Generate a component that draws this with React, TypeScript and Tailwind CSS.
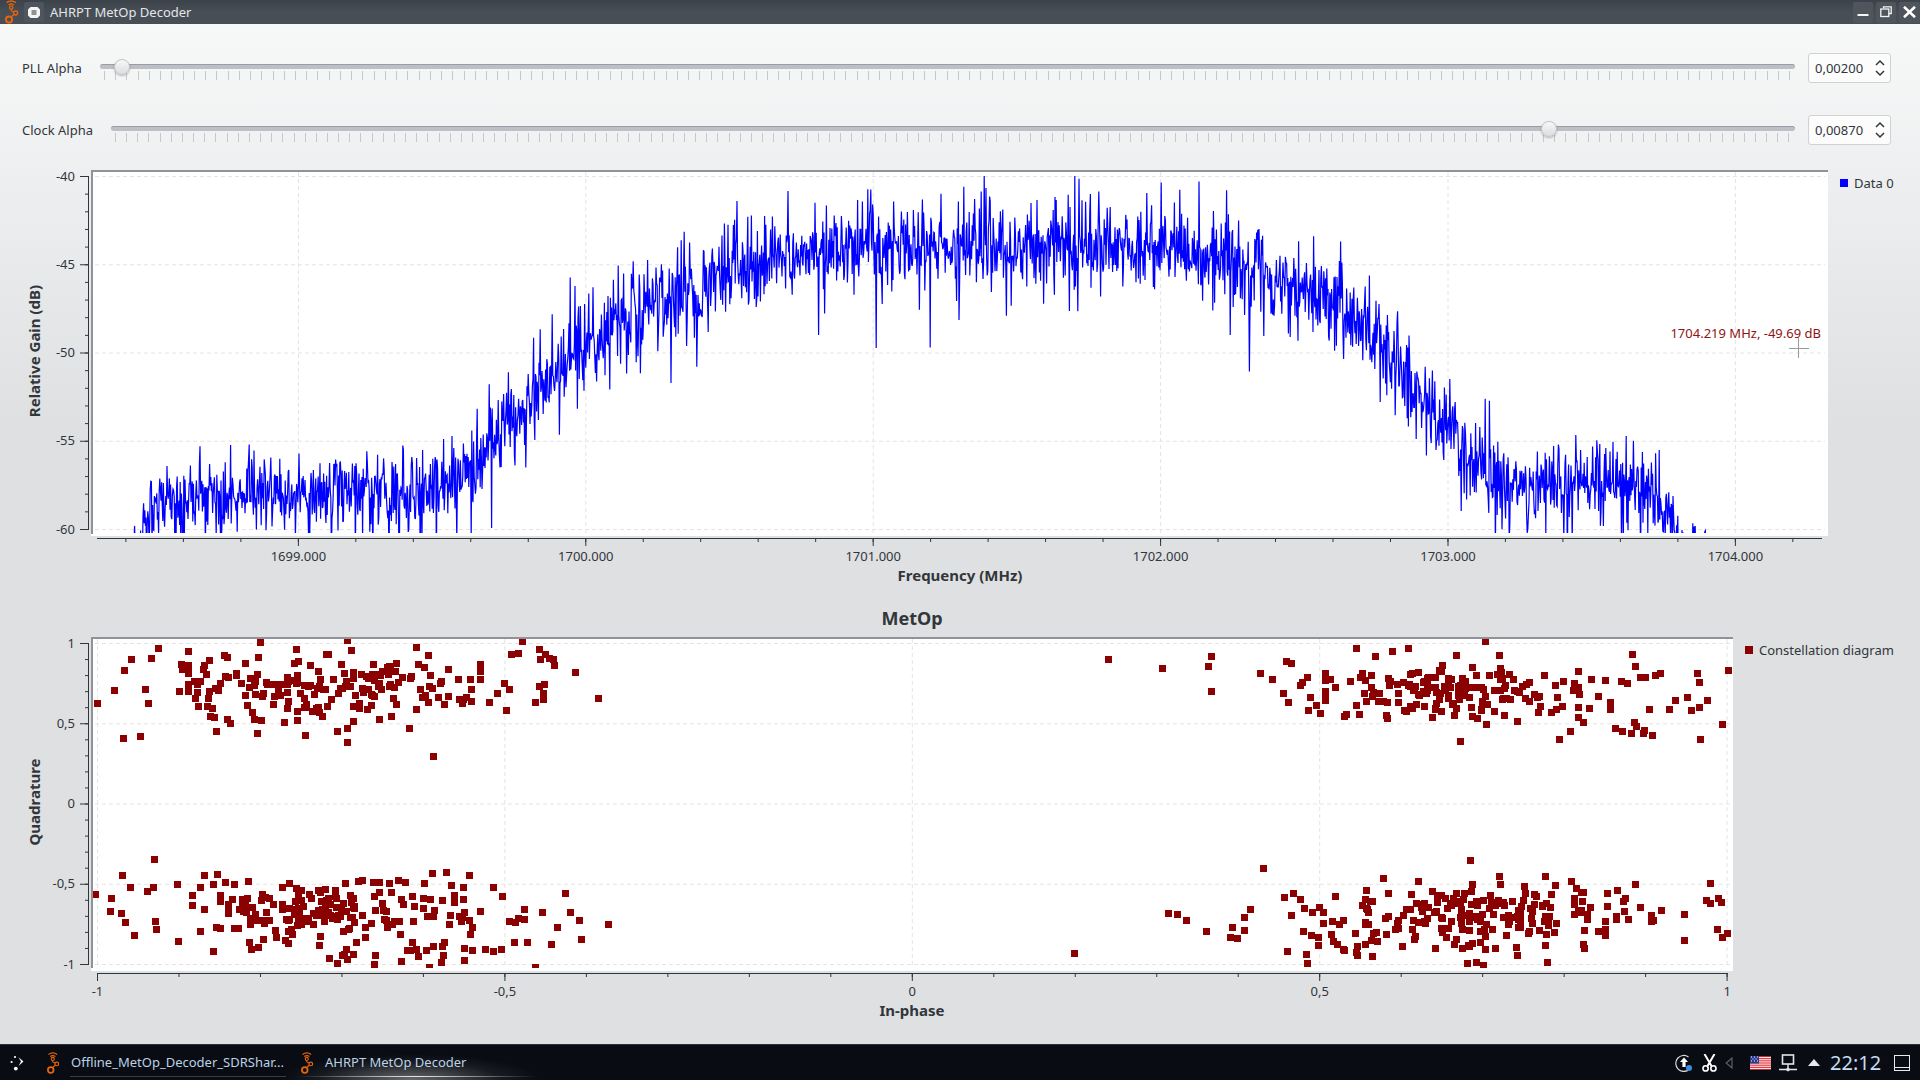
import React from 'react';

// small seeded generator so the noisy traces stay the same between runs
function makeRandom(seed: number) {
  let a = seed;
  return () => {
    a = (a + 0x6d2b79f5) | 0;
    let t = Math.imul(a ^ (a >>> 15), 1 | a);
    t = (t + Math.imul(t ^ (t >>> 7), 61 | t)) ^ t;
    return ((t ^ (t >>> 14)) >>> 0) / 4294967296;
  };
}

function gauss(rnd: () => number) {
  return Math.sqrt(-2 * Math.log(rnd() + 1e-9)) * Math.cos(2 * Math.PI * rnd());
}

const envelope: [number, number][] = [
  [125, -63], [140, -60.5], [160, -58.3], [300, -58], [420, -58], [470, -57], [500, -54.5], [540, -52],
  [585, -49.5], [650, -47.5], [733, -45.6], [800, -44.5], [900, -44], [1000, -44.3], [1100, -44], [1200, -44.5],
  [1280, -46], [1340, -47.5], [1380, -49.5], [1420, -52.5], [1460, -55.5], [1500, -57.5], [1600, -57.5],
  [1650, -57.5], [1670, -59.5], [1685, -61.8], [1709, -62.2]
];

function envelopeAt(x: number) {
  for (let i = 1; i < envelope.length; i++) {
    if (x <= envelope[i][0]) {
      const [x0, y0] = envelope[i - 1];
      const [x1, y1] = envelope[i];
      return y0 + ((x - x0) / (x1 - x0)) * (y1 - y0);
    }
  }
  return -65;
}

const dbToY = (db: number) => 176 + ((-40 - db) / 20) * 353;

function spectrumPoints() {
  const rnd = makeRandom(4242);
  const pts: string[] = [];
  for (let x = 125; x <= 1709; x += 0.6) {
    // the noise floor at both ends has shorter spikes than the passband
    const floor = x < 470 || x > 1500;
    const mean = envelopeAt(x);
    let v = mean + gauss(rnd) * (floor ? 0.95 : 1.1);
    const r = rnd();
    if (r < 0.12) v += 0.8 + rnd() * (floor ? 1.1 : 2.3);
    else if (r < 0.18) v -= 1 + rnd() * rnd() * 4.5;
    v = Math.min(v, mean + (floor ? 2.9 : 4.6));
    pts.push(`${x.toFixed(1)},${Math.max(dbToY(Math.min(v, -40)), 172).toFixed(1)}`);
  }
  return pts.join(' ');
}

const zoomA = (list: number[][]) => list.map(([x, y]) => [x / 2.45, y / 3 + 480]);
const zoomB = (list: number[][]) => list.map(([x, y]) => [x / 2.45, y / 3 + 840]);
const zoomC = (list: number[][]) => list.map(([x, y]) => [x / 2.529 + 1120, y / 3 + 630]);
const zoomD = (list: number[][]) => list.map(([x, y]) => [x / 2.529 + 1120, y / 3 + 850]);

const sparse: number[][] = [
  [1108, 659], [1074, 953],
  ...zoomA([[238,670],[280,631],[322,539],[305,571],[388,505],[371,536],[356,628],[363,670],[302,775],[344,769],[439,634],[445,553],[447,568],[501,556],[498,568],[513,541],[505,583],[550,526],[558,532],[553,589],[520,685],[515,709],[530,754],[630,760],[749,766],[851,787],[1003,745],[1061,829],[1410,577],[1466,655],[1240,691],[1312,667],[638,487],[726,508],[851,480],[804,523],[1281,485],[1321,508],[1337,523],[1347,536],[1358,556],[1355,539],[1324,538],[1321,619],[1334,613],[1331,640],[1331,658],[1254,523],[1270,520],[1248,628],[1236,610],[1218,640],[1200,667],[1155,664],[1133,670],[1125,658]]),
  ...zoomB([[378,58],[300,106],[235,163],[319,142],[361,154],[375,142],[273,175],[270,214],[297,220],[307,247],[380,244],[383,268],[329,286],[434,133],[437,304],[501,106],[491,142],[522,334],[1490,253],[1424,298],[1397,217],[1419,241],[1366,262],[1385,160],[1351,313],[1329,217],[1292,307],[1260,307],[1285,208],[1286,238],[1270,234],[1262,247],[1248,244],[1312,382],[1231,169],[1209,142],[1228,328],[1209,334],[1190,328],[1157,331],[1137,361],[1081,367],[1087,346],[1052,382],[1060,100],[1093,97],[1106,136],[1135,142],[917,373],[920,346],[826,370],[807,355],[851,358],[840,346],[983,364],[998,331],[1020,328],[633,322],[612,307]]),
  ...zoomC([[107,115],[231,79],[224,109],[231,184],[355,130],[386,148],[421,94],[433,100],[414,190],[426,217],[457,165],[461,157],[473,142],[482,202],[477,241],[497,226],[507,250],[1192,148],[1228,151],[1268,153],[1283,160],[1296,73],[1304,109],[1316,142],[1328,142],[1354,136],[1366,130],[1460,130],[1465,157],[1539,121],[1210,199],[1162,193],[1172,277],[1240,217],[1240,238],[1187,235],[1339,238],[1390,238],[1405,211],[1435,202],[1445,241],[1465,232],[1486,211],[1524,283],[1468,328],[1346,316],[1323,310],[1327,302],[1293,310],[1271,304],[1253,295],[1301,277],[1306,289],[1139,304],[1111,328],[598,55],[729,55],[688,64],[646,79],[924,33],[851,76],[1296,73]]),
  ...zoomD([[363,55],[886,31],[666,85],[123,190],[145,193],[168,211],[219,244],[284,232],[315,202],[330,178],[315,241],[280,262],[296,265],[416,142],[439,130],[456,148],[466,175],[433,196],[487,187],[504,172],[514,187],[514,220],[463,244],[484,256],[501,262],[501,286],[423,304],[472,313],[474,340],[545,139],[537,214],[554,223],[565,211],[535,253],[540,274],[550,283],[565,298],[568,301],[595,250],[600,289],[598,307],[600,316],[638,319],[628,223],[640,250],[648,247],[635,271],[650,274],[623,121],[613,166],[628,187],[704,235],[714,289],[1303,103],[1142,94],[1101,106],[1091,133],[1167,127],[1233,130],[1258,121],[1278,145],[1273,154],[1233,169],[1316,172],[1369,181],[1344,196],[1350,211],[1344,214],[1276,184],[1256,199],[1256,208],[1286,208],[1228,214],[1228,238],[1228,256],[1211,244],[1427,193],[1427,271],[1493,100],[1483,151],[1493,160],[1514,145],[1520,157],[1511,238],[1536,250],[1524,262],[1175,241],[1172,283],[1175,295],[1075,286],[1081,337],[1005,316],[1003,292],[950,295],[924,298],[912,277],[919,347],[902,337],[879,340],[1099,247],[1061,241],[1076,199]])
];

function cluster(rnd: () => number, n: number, x0: number, x1: number, cy: number, sd: number) {
  const out: number[][] = [];
  for (let i = 0; i < n; i++) {
    const x = x0 + ((rnd() + rnd()) / 2 * 1.25 - 0.125) * (x1 - x0);
    out.push([Math.min(Math.max(x, x0), x1), cy + gauss(rnd) * sd]);
  }
  return out;
}

function constellationPoints() {
  const rnd = makeRandom(77);
  return [
    ...sparse,
    ...cluster(rnd, 175, 188, 480, 688, 17),
    ...cluster(rnd, 165, 1325, 1578, 691, 17),
    ...cluster(rnd, 190, 192, 480, 912, 18),
    ...cluster(rnd, 160, 1365, 1590, 915, 16)
  ];
}

function range(from: number, to: number, step: number) {
  const out: number[] = [];
  for (let v = from; v <= to + 0.01; v += step) out.push(v);
  return out;
}

const labelText = 'fill-[#31363b] text-[13px]';
const axisTitle = 'fill-[#31363b] text-[15px] font-bold';

function Logo({ className }: { className: string }) {
  return <svg viewBox="0 0 16 24" className={className} fill="none" stroke="#e8650c">
      <path d="M2.5 2.6c3-2 6.5-2 9.5 0M4.4 4.8c2-1.2 3.7-1.2 5.7 0" strokeWidth="1.3" />
      <circle cx="7.2" cy="7.6" r="1.7" strokeWidth="1.2" />
      <path d="M7.2 9.5v1.6" strokeWidth="1.2" />
      <circle cx="11.6" cy="13" r="2" strokeWidth="1.3" />
      <path d="M7.5 11.2 10 12M9.9 14.5 7 17" strokeWidth="1.3" />
      <circle cx="5" cy="19.6" r="3.1" strokeWidth="1.9" />
    </svg>;
}

function Slider({ label, value, thumb, width }: { label: string; value: string; thumb: number; width: string }) {
  const ticks = range(0, 150, 1);
  return <div className="flex h-[30px] items-center pl-[22px] pr-[29px]">
      <div className={`${width} shrink-0 text-[13px] leading-[30px] text-[#31363b]`}>{label}</div>
      <div className="relative h-[30px] flex-1">
        <div className="mt-[11px] h-[5px] rounded-full border-t border-[#9a9da3] bg-[#bcbfc5]" />
        <div className="mt-[2px] flex h-[9px] justify-between pl-[4px] pr-[4px]">
          {ticks.map(t => <div key={t} className="h-full w-px bg-[#c6c8cc]" />)}
        </div>
        <div className="absolute top-[6px] h-4 w-4 rounded-full border border-[#c3c5c9] bg-gradient-to-b from-[#f8f8f8] to-[#dcdde0] shadow-[0_1px_2px_rgba(0,0,0,0.25)]" style={{ left: thumb }} />
      </div>
      <div className="ml-[13px] flex h-[30px] w-[83px] items-center justify-between rounded-[3px] border border-[#cfd1d4] bg-[#fcfcfc] pl-[6px] pr-[5px] text-[13px] text-[#31363b]">
        <span className="pt-[2px]">{value}</span>
        <svg width="10" height="18" viewBox="0 0 10 18" fill="none" stroke="#31363b" strokeWidth="1.5">
          <path d="M1 6l4-4 4 4M1 12l4 4 4-4" />
        </svg>
      </div>
    </div>;
}

function SpectrumChart() {
  const majorsX = range(298.4, 1736, 287.4);
  const minorsX = range(125.9, 1823, 57.48);
  const majorsY = [-40, -45, -50, -55, -60];
  const minorsY = range(176, 529.5, 17.65);
  return <svg viewBox="0 170 1828 427" className="h-[427px] w-[1828px] shrink-0 overflow-visible">
      <defs>
        <clipPath id="specClip"><rect x="93" y="172" width="1735" height="361" /></clipPath>
      </defs>
      <rect x="91" y="170" width="1737" height="366" fill="#ffffff" />
      <g stroke="#e4e4e4" strokeDasharray="4 3" fill="none">
        {majorsY.map(d => <line key={d} x1="95" x2="1825" y1={dbToY(d) + 0.5} y2={dbToY(d) + 0.5} />)}
        {majorsX.map(x => <line key={x} x1={x} x2={x} y1="172" y2="534" />)}
      </g>
      <g clipPath="url(#specClip)">
        <polyline points={spectrumPoints()} fill="none" stroke="#0000ff" strokeWidth="1.2" />
      </g>
      <rect x="91" y="170" width="1737" height="2" fill="#8f9298" />
      <rect x="91" y="170" width="2" height="364" fill="#8f9298" />
      <g stroke="#31363b" fill="none">
        <line x1="88.5" x2="88.5" y1="176" y2="530" />
        {minorsY.map(y => <line key={y} x1="85" x2="89" y1={y + 0.5} y2={y + 0.5} />)}
        {majorsY.map(d => <line key={d} x1="80" x2="89" y1={dbToY(d) + 0.5} y2={dbToY(d) + 0.5} />)}
        <line x1="97" x2="1822" y1="538.5" y2="538.5" />
        {minorsX.map(x => <line key={x} x1={x} x2={x} y1="538" y2="542" />)}
        {majorsX.map(x => <line key={x} x1={x} x2={x} y1="538" y2="546" />)}
      </g>
      {majorsY.map(d => <text key={d} x="75" y={dbToY(d) + 4.5} textAnchor="end" className={labelText}>{d}</text>)}
      {majorsX.map((x, i) => <text key={x} x={x} y="560.5" textAnchor="middle" className={labelText}>{`${1699 + i}.000`}</text>)}
      <text x="960" y="581" textAnchor="middle" className={axisTitle}>Frequency (MHz)</text>
      <text transform="translate(40 351) rotate(-90)" textAnchor="middle" className={axisTitle}>Relative Gain (dB)</text>
      <text x="1821" y="337.5" textAnchor="end" className="fill-[#8f1414] text-[13px]">1704.219 MHz, -49.69 dB</text>
      <g stroke="#9b9b9b" strokeWidth="1">
        <line x1="1789" x2="1809" y1="348.5" y2="348.5" />
        <line x1="1798.5" x2="1798.5" y1="338" y2="358" />
      </g>
    </svg>;
}

function ConstellationChart() {
  const majorsX = range(97.5, 1728, 407.4);
  const minorsX = range(97.5, 1728, 81.48);
  const majorsY = range(643, 965, 80.25);
  const minorsY = range(643, 965, 16.05);
  const xLabels = ['-1', '-0,5', '0', '0,5', '1'];
  const yLabels = ['1', '0,5', '0', '-0,5', '-1'];
  return <svg viewBox="0 637 1733 407" className="h-[407px] w-[1733px] shrink-0 overflow-visible">
      <defs>
        <clipPath id="constClip"><rect x="93" y="639" width="1640" height="329" /></clipPath>
      </defs>
      <rect x="91" y="637" width="1642" height="334" fill="#ffffff" />
      <g stroke="#e4e4e4" strokeDasharray="4 3" fill="none">
        {majorsY.map(y => <line key={y} x1="95" x2="1730" y1={y + 0.5} y2={y + 0.5} />)}
        {majorsX.map(x => <line key={x} x1={x} x2={x} y1="639" y2="968" />)}
      </g>
      <g clipPath="url(#constClip)" fill="#8b0000">
        {constellationPoints().map(([x, y], i) => <rect key={i} x={Math.round(x - 3.5)} y={Math.round(y - 3.5)} width="7" height="7" />)}
      </g>
      <rect x="91" y="637" width="1642" height="2" fill="#8f9298" />
      <rect x="91" y="637" width="2" height="331" fill="#8f9298" />
      <g stroke="#31363b" fill="none">
        <line x1="88.5" x2="88.5" y1="643" y2="965" />
        {minorsY.map(y => <line key={y} x1="85" x2="89" y1={y + 0.5} y2={y + 0.5} />)}
        {majorsY.map(y => <line key={y} x1="80" x2="89" y1={y + 0.5} y2={y + 0.5} />)}
        <line x1="97" x2="1728" y1="973.5" y2="973.5" />
        {minorsX.map(x => <line key={x} x1={x} x2={x} y1="973" y2="977" />)}
        {majorsX.map(x => <line key={x} x1={x} x2={x} y1="973" y2="981" />)}
      </g>
      {majorsY.map((y, i) => <text key={y} x="75" y={y + 4.5} textAnchor="end" className={labelText}>{yLabels[i]}</text>)}
      {majorsX.map((x, i) => <text key={x} x={x} y="995.5" textAnchor="middle" className={labelText}>{xLabels[i]}</text>)}
      <text x="912" y="1016" textAnchor="middle" className={axisTitle}>In-phase</text>
      <text transform="translate(40 802) rotate(-90)" textAnchor="middle" className={axisTitle}>Quadrature</text>
    </svg>;
}

function TitleBar() {
  return <div className="flex h-6 shrink-0 items-center bg-gradient-to-b from-[#3c4249] via-[#474e56] to-[#474e56] text-[13px] text-[#e4e6e8]">
      <Logo className="ml-[4px] h-6 w-4" />
      <div className="ml-[4px] flex h-5 w-5 items-center justify-center rounded-[2px] bg-[#4f555d]">
        <svg width="12" height="11" viewBox="0 0 12 11">
          <rect x="3" y="2.5" width="6" height="6" fill="#8f9397" />
          <path fillRule="evenodd" d="M2.5 0h7L12 2.5v6L9.5 11h-7L0 8.5v-6zM3.5 3v5h5V3z" fill="#f4f5f5" />
        </svg>
      </div>
      <span className="ml-[6px] pt-px">AHRPT MetOp Decoder</span>
      <div className="ml-auto flex gap-[3px]">
        <div className="flex h-[21px] w-5 items-center justify-center rounded-[2px] bg-[#4f555d]">
          <svg width="12" height="12" viewBox="0 0 12 12"><rect x="0.5" y="8" width="11" height="2" fill="#f4f5f5" /></svg>
        </div>
        <div className="flex h-[21px] w-5 items-center justify-center rounded-[2px] bg-[#4f555d]">
          <svg width="12" height="12" viewBox="0 0 12 12" fill="none" stroke="#f4f5f5" strokeWidth="1.3">
            <path d="M3.5 2V.8h7.7v6.7H9" />
            <rect x="0.8" y="3" width="8" height="7.5" />
          </svg>
        </div>
        <div className="flex h-[21px] w-[21px] items-center justify-center rounded-[2px] bg-[#4f555d]">
          <svg width="13" height="12" viewBox="0 0 13 12" stroke="#ffffff" strokeWidth="2.6"><path d="M1 .8l11 10.4M12 .8 1 11.2" /></svg>
        </div>
      </div>
    </div>;
}

function Taskbar() {
  return <div className="relative flex h-9 shrink-0 items-center border-t border-[#2d2f33] bg-[#090c12] bg-[radial-gradient(ellipse_130px_26px_at_410px_100%,rgba(255,255,255,0.38),rgba(255,255,255,0.06)_70%,transparent)] text-[13px] text-[#bcd2e6]">
      <svg width="18" height="18" viewBox="0 0 18 18" fill="#ffffff" className="ml-[8px]">
        <circle cx="3.6" cy="8" r="1.1" />
        <circle cx="7" cy="3" r="1.1" />
        <circle cx="7.8" cy="14.6" r="1.9" />
        <path d="M10.5 3.2 15.5 7.6 10.5 12 13 7.6z" />
      </svg>
      <Logo className="ml-[20px] h-[22px] w-[15px]" />
      <span className="ml-[10px]">Offline_MetOp_Decoder_SDRShar...</span>
      <Logo className="ml-[16px] h-[22px] w-[15px]" />
      <span className="ml-[10px]">AHRPT MetOp Decoder</span>
      <div className="ml-auto flex items-center">
        <svg width="18" height="18" viewBox="0 0 18 18" fill="none">
          <path d="M13.5 3A8 8 0 1 0 14 15.5" stroke="#d8dadc" strokeWidth="1.2" />
          <path d="M9 3.6 13 8h-2.4v5H7.4V8H5z" fill="#ffffff" />
          <circle cx="14" cy="14" r="3" fill="#3d8ee0" />
        </svg>
        <svg width="15" height="18" viewBox="0 0 15 18" fill="none" stroke="#ffffff" className="ml-[9px]">
          <path d="M2.5 0 9.5 12M12.5 0 5.5 12" strokeWidth="2" />
          <circle cx="3.6" cy="14.4" r="2.6" strokeWidth="1.6" />
          <circle cx="11.4" cy="14.4" r="2.6" strokeWidth="1.6" />
        </svg>
        <svg width="8" height="12" viewBox="0 0 8 12" fill="none" stroke="#5d6063" strokeWidth="1.2" className="ml-[8px]">
          <path d="M7 1v10L1.2 6z" />
        </svg>
        <svg width="21" height="14" viewBox="0 0 21 14" className="ml-[17px]">
          <rect width="21" height="14" fill="#ffffff" />
          {[0, 2.15, 4.3, 6.45, 8.6, 10.75, 12.9].map(y => <rect key={y} y={y} width="21" height="1.1" fill="#d8232a" />)}
          <rect width="9" height="7.5" fill="#2b3a8c" />
          <path d="M1 1h1M4 1h1M7 1h1M2.5 3h1M5.5 3h1M1 5h1M4 5h1M7 5h1" stroke="#ffffff" strokeWidth="1" />
        </svg>
        <svg width="18" height="18" viewBox="0 0 18 18" fill="none" stroke="#e4e5e6" className="ml-[8px]">
          <rect x="3.5" y="1" width="11" height="9" strokeWidth="1.6" />
          <path d="M9 10v4M0 15.5h18" strokeWidth="1.4" />
          <circle cx="9" cy="15.5" r="1.4" fill="#e4e5e6" />
        </svg>
        <svg width="12" height="7" viewBox="0 0 12 7" fill="#e8e9ea" className="ml-[11px]"><path d="M6 0l6 7H0z" /></svg>
        <span className="ml-[10px] w-[52px] text-[20px] leading-none text-[#c4def6]">22:12</span>
        <svg width="16" height="16" viewBox="0 0 16 16" fill="none" stroke="#e8e9ea" className="ml-[12px] mr-[10px]">
          <rect x="0.5" y="0.5" width="15" height="15" />
          <path d="M0.5 12.5h15" />
        </svg>
      </div>
      <div className="absolute bottom-[3px] left-[70px] h-px w-[216px] bg-[#3a3d42]" />
      <div className="absolute bottom-[3px] left-[296px] h-px w-[240px] bg-gradient-to-r from-transparent via-[#e8e8e8] to-transparent" />
    </div>;
}

export default function App() {
  return <div className="flex h-[1080px] w-[1920px] flex-col overflow-hidden bg-[#dfe0e2] font-['Noto_Sans',sans-serif]">
      <TitleBar />
      <div className="flex flex-1 flex-col bg-[linear-gradient(#f7f8f8_0,#dfe0e2_400px)]">
        <div className="h-[29px]" />
        <Slider label="PLL Alpha" value="0,00200" thumb={14} width="w-[78px]" />
        <div className="h-[32px]" />
        <Slider label="Clock Alpha" value="0,00870" thumb={1430} width="w-[89px]" />
        <div className="h-[25px]" />
        <div className="flex">
          <SpectrumChart />
          <div className="ml-[12px] flex h-[26px] items-center gap-[6px] text-[13px] text-[#31363b]">
            <div className="h-2 w-2 bg-[#0000ff]" />
            <span className="pt-[2px]">Data 0</span>
          </div>
        </div>
        <div className="flex h-10 w-[1733px] items-center justify-center pl-[91px] pt-[2px] text-[18px] font-bold text-[#31363b]">MetOp</div>
        <div className="flex">
          <ConstellationChart />
          <div className="ml-[12px] flex h-[26px] items-center gap-[6px] text-[13px] whitespace-nowrap text-[#31363b]">
            <div className="h-2 w-2 bg-[#8b0000]" />
            <span className="pt-[2px]">Constellation diagram</span>
          </div>
        </div>
      </div>
      <Taskbar />
    </div>;
}
